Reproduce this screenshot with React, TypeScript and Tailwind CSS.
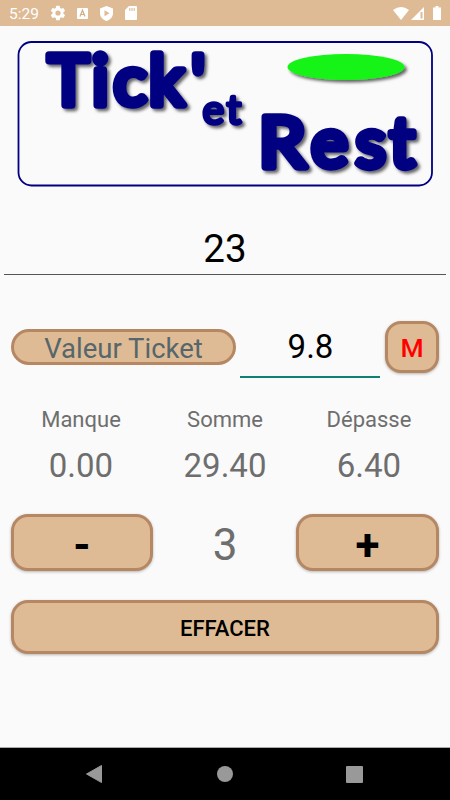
import { ReactNode, useState } from "react";

const TICKET = 9.8;
const box = "border-[3px] border-[#b58763] bg-[#debb95] flex items-center justify-center";
const raised = "shadow-[0_1px_3px_rgba(0,0,0,0.28)]";

function StatusBar() {
  return (
    <div className="h-[26px] shrink-0 bg-[#debb95] flex items-center pl-[9px] pr-[8px] text-white">
      <div className="text-[15.5px] leading-[26px] w-[41px] pt-[2px]">5:29</div>
      <svg className="w-4 h-4" viewBox="1 1 22 22" fill="currentColor">
        <path d="M19.4 13a7.5 7.5 0 0 0 0-2l2.1-1.6a.5.5 0 0 0 .1-.6l-2-3.5a.5.5 0 0 0-.6-.2l-2.5 1a7.3 7.3 0 0 0-1.7-1l-.4-2.6a.5.5 0 0 0-.5-.5h-4a.5.5 0 0 0-.5.5L9 5.100a7.300 7.300 0 0 0-1.700 1l-2.500-1a.5.5 0 0 0-.6.2l-2 3.500a.5.5 0 0 0 .1.6L4.500 11a7.500 7.500 0 0 0 0 2l-2.200 1.600a.5.5 0 0 0-.1.6l2 3.500c.1.2.4.3.6.2l2.500-1a7.300 7.300 0 0 0 1.700 1l.4 2.600c0 .3.2.5.5.5h4c.3 0 .5-.2.5-.5l.4-2.600a7.300 7.300 0 0 0 1.700-1l2.500 1c.2.1.5 0 .6-.2l2-3.500a.5.5 0 0 0-.1-.6zM12 15.600a3.600 3.600 0 1 1 0-7.200 3.600 3.600 0 0 1 0 7.200z" />
      </svg>
      <svg className="w-[11px] h-[11px] ml-[11px]" viewBox="0 0 11 11">
        <rect width="11" height="11" rx="1" fill="white" />
        <path d="M3 8.500 5.500 2.200 8 8.500M3.900 6.500h3.200" fill="none" stroke="#d3ad86" strokeWidth="1.200" />
      </svg>
      <svg className="w-[13px] h-[15px] ml-[12px]" viewBox="0 0 13 15">
        <path d="M6.500 0 13 2.600V7c0 3.800-2.700 7-6.500 8C2.700 14 0 10.800 0 7V2.600z" fill="white" />
        <path d="M4.500 4.300v6l5-3z" fill="#debb95" />
      </svg>
      <svg className="w-[12px] h-[14px] ml-[12px]" viewBox="0 0 12 14">
        <path d="M4 0h7q1 0 1 1v12q0 1-1 1H1q-1 0-1-1V4z" fill="white" />
        <path d="M4.800 2v3M7 2v3M9.200 2v3" stroke="#debb95" strokeWidth="1.100" />
      </svg>
      <div className="flex-1" />
      <svg className="w-[16px] h-[13px]" viewBox="0 0 16 13">
        <path d="M0 3Q8-3 16 3L8 13z" fill="white" />
      </svg>
      <svg className="w-[13px] h-[13px] ml-[2px]" viewBox="0 0 13 13">
        <path d="M13 0v13H0z" fill="white" />
        <path d="M10.500 5v6.500" stroke="#debb95" strokeWidth="2" />
      </svg>
      <svg className="w-[8px] h-[14px] ml-[9px] mr-[1px]" viewBox="0 0 8 14">
        <path d="M2.500 0h3v1.500H8V14H0V1.500h2.500z" fill="white" />
      </svg>
    </div>
  );
}

function Logo() {
  return (
    <svg className="w-[450px] h-[161px] shrink-0" viewBox="0 26 450 161" fontFamily="Lato, sans-serif">
      <defs>
        <filter id="shadow" x="-10%" y="-20%" width="120%" height="150%">
          <feDropShadow dx="2.500" dy="2.500" stdDeviation="1.700" floodColor="#000" floodOpacity="0.6" />
        </filter>
      </defs>
      <rect x="18.500" y="42" width="413.500" height="143.500" rx="13" fill="none" stroke="#000080" strokeWidth="1.800" />
      <g fill="#000080" stroke="#000080" strokeLinejoin="round" strokeLinecap="round" fontWeight="400" filter="url(#shadow)">
        <text x="48 92 113.500 149 191" y="105" fontSize="69" strokeWidth="7.500">Tick'</text>
        <text x="202.500 226.500" y="124" fontSize="41" strokeWidth="3.600">et</text>
        <text x="0" y="0" fontSize="70" strokeWidth="7.300" transform="translate(258.500 167) scale(1.080 1)">R</text>
        <text x="311 355.500 389.500" y="167" fontSize="70" strokeWidth="7.300">est</text>
      </g>
      <ellipse cx="346" cy="67" rx="58.500" ry="13" fill="#12f312" filter="url(#shadow)" />
    </svg>
  );
}

function Total({ label, children }: { label: string; children: ReactNode }) {
  return (
    <div className="flex-1 flex flex-col items-center text-[#6e6e6e]">
      <div className="text-[22px] leading-[26px]">{label}</div>
      <div className="text-[33px] leading-[40px] mt-[13px]">{children}</div>
    </div>
  );
}

export default function App() {
  const [amount, setAmount] = useState("23");
  const [count, setCount] = useState(3);
  const sum = count * TICKET;
  const diff = sum - Number(amount);

  return (
    <div className="w-[450px] h-[800px] overflow-hidden flex flex-col bg-[#fafafa] font-['Roboto',sans-serif]">
      <StatusBar />
      <Logo />
      <input
        className="mx-1 mt-[36px] h-[52px] shrink-0 border-b border-[#555] text-center text-[38.5px] leading-[50px] text-black outline-none"
        value={amount}
        onChange={(e) => setAmount(e.target.value)}
      />
      <div className="flex h-[58px] mt-[46px] pl-[11px] pr-[11px] shrink-0">
        <div className={`${box} w-[225px] h-[36px] mt-[8px] pt-[3px] rounded-[18px] text-[27.5px] text-[#56666a]`}>
          Valeur Ticket
        </div>
        <div className="w-[140px] h-[57px] ml-[4px] pl-[1px] border-b-2 border-[#128070] text-center text-[33px] leading-[52px] text-black">
          {TICKET}
        </div>
        <button className={`${box} ${raised} w-[54px] h-[52px] ml-[5px] pt-[2px] rounded-[16px] text-[26.5px] font-medium text-[#ff0000]`}>M</button>
      </div>
      <div className="flex px-[9px] mt-[28px] shrink-0">
        <Total label="Manque">{Math.max(0, -diff).toFixed(2)}</Total>
        <Total label="Somme">{sum.toFixed(2)}</Total>
        <Total label="Dépasse">{Math.max(0, diff).toFixed(2)}</Total>
      </div>
      <div className="flex items-center px-[11px] mt-[28px] h-[57px] shrink-0">
        <button className={`${box} ${raised} w-[142px] h-[57px] pt-[5px] rounded-[17px] text-[44px] font-bold`} onClick={() => setCount(count - 1)}>-</button>
        <div className="flex-1 text-center text-[44px] leading-[58px] pt-[4px] pl-[1px] text-[#6e6e6e]">{count}</div>
        <button className={`${box} ${raised} w-[143px] h-[57px] pt-[5px] rounded-[17px] text-[44px] font-bold`} onClick={() => setCount(count + 1)}>+</button>
      </div>
      <button className={`${box} ${raised} mx-[11px] mt-[29px] h-[54px] pt-[2px] shrink-0 rounded-[17px] text-[22px] font-medium`} onClick={() => setCount(0)}>
        EFFACER
      </button>
      <div className="flex-1" />
      <div className="h-[53px] shrink-0 bg-black border-t border-[#aaa] flex items-center justify-between pl-[86px] pr-[87px]">
        <svg className="w-[16px] h-[18px]" viewBox="0 0 16 18">
          <path d="M15.500.5v17L.5 9z" fill="#999" stroke="#999" strokeLinejoin="round" />
        </svg>
        <div className="w-4 h-4 ml-[2px] rounded-full bg-[#999]" />
        <div className="w-[17px] h-[17px] rounded-[1px] bg-[#999]" />
      </div>
    </div>
  );
}
